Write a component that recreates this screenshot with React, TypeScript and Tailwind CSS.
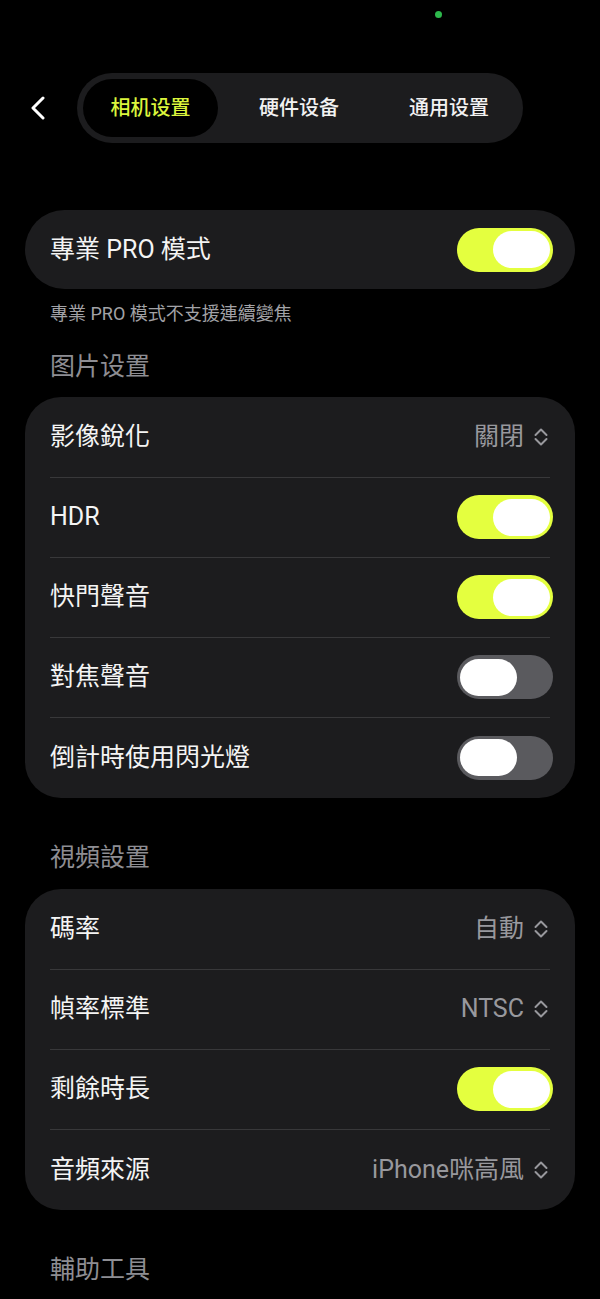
import React from "react";

const FONT_TC = { fontFamily: '"Roboto", "Noto Sans CJK TC", sans-serif' };
const FONT_SC = { fontFamily: '"Roboto", "Noto Sans CJK SC", sans-serif' };

function Toggle({ on }: { on: boolean }) {
  return (
    <div
      className={
        "-mr-[3px] flex h-[44px] w-[96px] items-center rounded-full px-[3px] " +
        (on ? "justify-end bg-[#e4ff3f]" : "justify-start bg-[#5a5a5e]")
      }
    >
      <div className="h-[37px] w-[57px] rounded-full bg-white" />
    </div>
  );
}

function UpDown() {
  return (
    <svg width="14" height="22" viewBox="0 0 14 22" className="ml-[10px]" fill="none">
      <path d="M1.5 9 L7 3.5 L12.5 9" stroke="#98989d" strokeWidth="2" strokeLinecap="round" strokeLinejoin="round" />
      <path d="M1.5 13 L7 18.5 L12.5 13" stroke="#98989d" strokeWidth="2" strokeLinecap="round" strokeLinejoin="round" />
    </svg>
  );
}

type Row = { label: string; toggle?: boolean; value?: string };

function Card({ rows }: { rows: Row[] }) {
  return (
    <div className="mx-[25px] rounded-[36px] bg-[#1c1c1e] px-[25px] py-[0.5px]">
      {rows.map((r, i) => (
        <div
          key={i}
          className={
            "flex items-center justify-between " +
            (i < rows.length - 1 ? "h-[80px] border-b border-[#38383a]" : "h-[80px]")
          }
        >
          <span className="text-[25px] leading-[32px] text-[#f4f4f4]">{r.label}</span>
          {r.value !== undefined ? (
            <div className="mr-[2px] flex items-center">
              <span className="text-[25px] leading-[32px] text-[#98989d]">{r.value}</span>
              <UpDown />
            </div>
          ) : (
            <Toggle on={!!r.toggle} />
          )}
        </div>
      ))}
    </div>
  );
}

function Header({ text, className }: { text: string; className: string }) {
  return (
    <div className={"px-[50px] text-[25px] leading-[32px] text-[#8e8e93] " + className}>{text}</div>
  );
}

export default function App() {
  return (
    <div className="relative min-h-[1299px] w-[600px] overflow-hidden bg-black" style={FONT_TC}>
      <div className="absolute left-[435px] top-[11px] h-[7px] w-[7px] rounded-full bg-[#2db84c]" />

      <div className="h-[73px]" />

      <div className="flex h-[70px] items-center">
        <div className="flex w-[77px] items-center pl-[30px]">
          <svg width="16" height="24" viewBox="0 0 16 24" fill="none">
            <path d="M13 2 L3 12 L13 22" stroke="#ffffff" strokeWidth="3" strokeLinecap="round" strokeLinejoin="round" />
          </svg>
        </div>
        <div className="flex h-[70px] w-[446px] items-center rounded-full bg-[#1c1c1e] pl-[6px]" style={FONT_SC}>
          <div className="flex h-[58px] w-[135px] items-center justify-center rounded-full bg-black text-[20px] font-medium text-[#dbf53c]">
            相机设置
          </div>
          <div className="flex h-[58px] w-[162px] items-center justify-center text-[20px] font-medium text-[#f2f2f2]">
            硬件设备
          </div>
          <div className="flex h-[58px] w-[138px] items-center justify-center text-[20px] font-medium text-[#f2f2f2]">
            通用设置
          </div>
        </div>
      </div>

      <div className="mx-[25px] mt-[67px] flex h-[79px] items-center justify-between rounded-full bg-[#1c1c1e] px-[25px]">
        <span className="text-[25px] leading-[32px] text-[#f4f4f4]">專業 PRO 模式</span>
        <Toggle on />
      </div>

      <div className="mt-[13px] px-[50px] text-[18px] leading-[24px] text-[#a2a2a6]">專業 PRO 模式不支援連續變焦</div>

      <div style={FONT_SC}>
        <Header text="图片设置" className="mt-[25px]" />
      </div>
      <div className="mt-[14px]">
        <Card
          rows={[
            { label: "影像銳化", value: "關閉" },
            { label: "HDR", toggle: true },
            { label: "快門聲音", toggle: true },
            { label: "對焦聲音", toggle: false },
            { label: "倒計時使用閃光燈", toggle: false },
          ]}
        />
      </div>

      <Header text="視頻設置" className="mt-[44px]" />
      <div className="mt-[15px]">
        <Card
          rows={[
            { label: "碼率", value: "自動" },
            { label: "幀率標準", value: "NTSC" },
            { label: "剩餘時長", toggle: true },
            { label: "音頻來源", value: "iPhone咪高風" },
          ]}
        />
      </div>

      <Header text="輔助工具" className="mt-[44px]" />
    </div>
  );
}
